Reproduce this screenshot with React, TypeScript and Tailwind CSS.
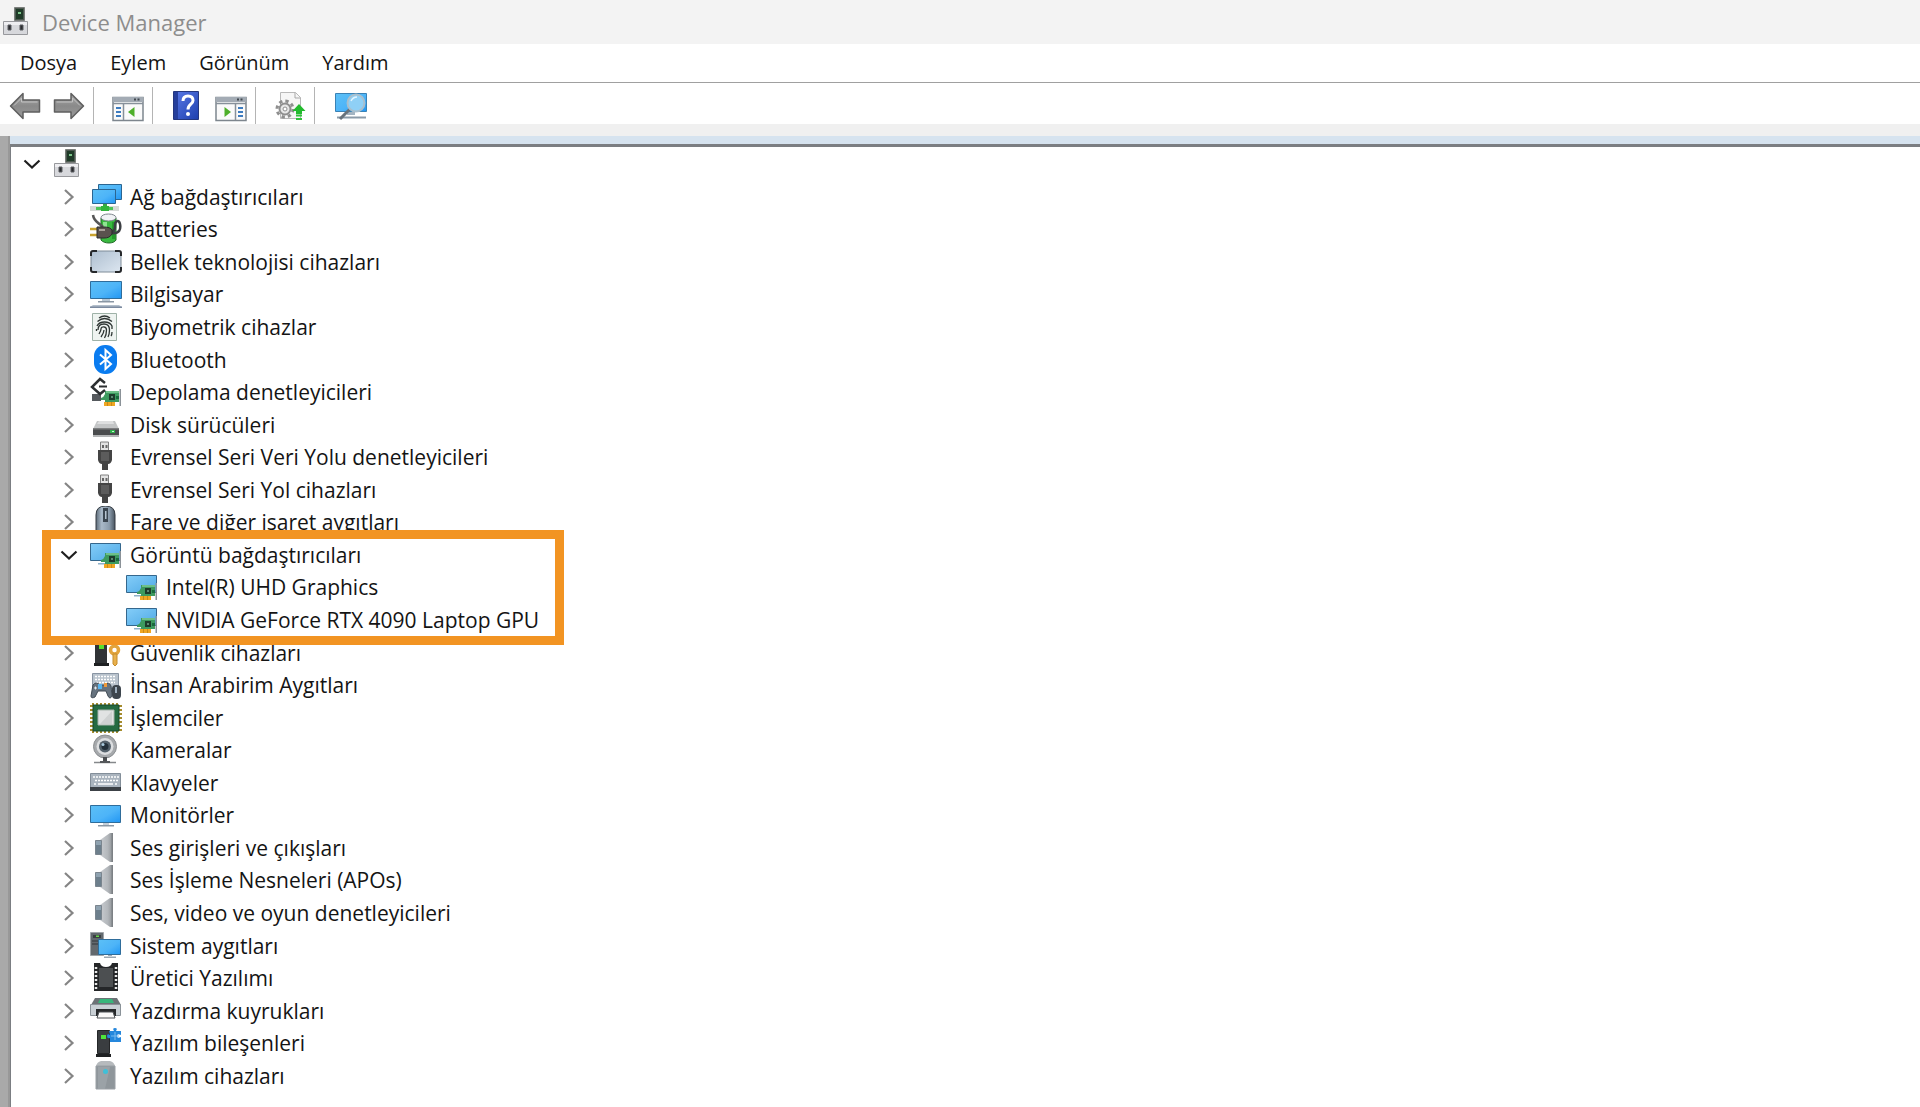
import { useState } from 'react';
import type { ReactNode } from 'react';

/* ---------- shared icon parts ---------- */

function Icon({ children }: { children: ReactNode }) {
  return (
    <svg viewBox="0 0 32 32" className="h-8 w-8 shrink-0" aria-hidden="true">
      {children}
    </svg>
  );
}

function Gradients() {
  return (
    <svg className="absolute h-0 w-0" aria-hidden="true">
      <defs>
        <linearGradient id="screen" x1="0" y1="0" x2="1" y2="1">
          <stop offset="0" stopColor="#5cc0f6" />
          <stop offset="0.55" stopColor="#4db4f8" />
          <stop offset="1" stopColor="#2196f3" />
        </linearGradient>
        <linearGradient id="paleScreen" x1="0" y1="0" x2="1" y2="1">
          <stop offset="0" stopColor="#84cdf8" />
          <stop offset="1" stopColor="#4fa9e6" />
        </linearGradient>
        <linearGradient id="steel" x1="0" y1="0" x2="1" y2="1">
          <stop offset="0" stopColor="#aebfd0" />
          <stop offset="1" stopColor="#dce6f0" />
        </linearGradient>
        <linearGradient id="arrow" x1="0" y1="0" x2="0" y2="1">
          <stop offset="0" stopColor="#a9a9a9" />
          <stop offset="0.5" stopColor="#8a8a8a" />
          <stop offset="1" stopColor="#9a9a9a" />
        </linearGradient>
        <linearGradient id="cone" x1="0" y1="0" x2="1" y2="0">
          <stop offset="0" stopColor="#c9ccd0" />
          <stop offset="0.6" stopColor="#b3b7bb" />
          <stop offset="1" stopColor="#8c9094" />
        </linearGradient>
        <linearGradient id="mouse" x1="0" y1="0" x2="1" y2="0">
          <stop offset="0" stopColor="#5e6c79" />
          <stop offset="0.3" stopColor="#a9b9c8" />
          <stop offset="0.7" stopColor="#8a9bab" />
          <stop offset="1" stopColor="#4a5560" />
        </linearGradient>
        <linearGradient id="book" x1="0" y1="0" x2="1" y2="1">
          <stop offset="0" stopColor="#5b7be8" />
          <stop offset="1" stopColor="#1d3fae" />
        </linearGradient>
      </defs>
    </svg>
  );
}

function DeviceHubIcon() {
  return (
    <svg viewBox="0 0 28 32" className="h-8 w-7 shrink-0" aria-hidden="true">
      <path d="M12.5 1.500h10v13h-10z" fill="#4d5951" stroke="#7b7f7c" />
      <path d="M14 3h7v10h-7z" fill="#1f3a28" />
      <path d="M16 6h3v2h-3z" fill="#7dc68a" />
      <path d="M1.500 15.500h24v13h-24z" fill="#d7d8dc" stroke="#97989c" />
      <path d="M2 16h23v3H2z" fill="#eeeef1" />
      <path d="M6 19h3v5H6zM18 19h3v5h-3z" fill="#2b2c30" stroke="#5b5c60" />
    </svg>
  );
}

const NetworkIcon = () => (
  <Icon>
    <path d="M8.500 3.500h23v15h-23z" fill="url(#screen)" stroke="#2b6591" />
    <path d="M2.500 8.500h23v14h-23z" fill="url(#screen)" stroke="#2b6591" />
    <path d="M13 23h4v3h-4z" fill="#3aa745" />
    <path d="M0 25h29v5H0z" fill="#d5dad6" />
    <path d="M6 26h17v3H6z" fill="#4cc456" />
    <path d="M11 25h8v5h-8z" fill="#30b53b" />
  </Icon>
);

const BatteryIcon = () => (
  <Icon>
    <path d="M11 5c3 3 12 3 15 0v22c-2 4-12 4-15 0z" fill="#39b93f" stroke="#226b28" />
    <path d="M13 9h4v9h-4z" fill="#8fe491" />
    <path d="M22 9h3v17h-3z" fill="#259a2c" />
    <ellipse cx="18.500" cy="4.500" rx="7.500" ry="3.500" fill="#f0f2f4" stroke="#7d858c" />
    <path d="M3 2c1 7 5 7 10 12" fill="none" stroke="#565656" strokeWidth="2.500" />
    <path d="M21 20c9 1 10-4 9-9s-5-3-5 1 0 5-3 7" fill="none" stroke="#3c3f43" strokeWidth="2.500" />
    <path d="M0 16h8M0 22h8" stroke="#c9a330" strokeWidth="2.500" />
    <path d="M7 14h7c4 0 7 1 8 3v4c-2 3-4 4-8 4H7z" fill="#5a524e" stroke="#2b2b2b" />
    <path d="M9 16h6v2H9z" fill="#a9a09a" />
  </Icon>
);

const MemoryIcon = () => (
  <Icon>
    <rect x="1" y="5" width="30" height="21" rx="2" fill="url(#steel)" stroke="#7f8c98" />
    <path
      d="M1 10V7q0-2 2-2h4M25 5h4q2 0 2 2v3M31 21v3q0 2-2 2h-4M7 26H3q-2 0-2-2v-3"
      fill="none"
      stroke="#26282b"
      strokeWidth="2"
    />
  </Icon>
);

const ComputerIcon = () => (
  <Icon>
    <path d="M.5 3.500h31v17H.5z" fill="url(#screen)" stroke="#2f6d9b" />
    <path d="M12 21h8v2h-8z" fill="#b9c7d3" />
    <path d="M8 23h16v1.500H8z" fill="#8a97a4" />
    <path d="M3 27h26l3 2H0z" fill="#b3bfcb" />
    <path d="M0 28.500h32V30H0z" fill="#7c8ba0" />
  </Icon>
);

const FingerprintIcon = () => (
  <Icon>
    <path d="M2.500 2.500h24v27h-24z" fill="#eff4f1" stroke="#9fb2a8" />
    <g fill="none" stroke="#2e3533" strokeWidth="1.300">
      <path d="M9 7q5.500-4 11 0M7.500 10.500q7-6 14.500 0M7 15q2-4 7.500-4t7.500 4v3M8 19q0-6 6-6 5.500 0 5.500 6 0 4-1.500 7" />
      <path d="M9 23q2-3 2-5c0-3 5.500-3 5.500 1q0 5-2 8M11 26q3-4 3-7M22 21q0 3-1 4M6.500 18v2" />
    </g>
  </Icon>
);

const BluetoothIcon = () => (
  <Icon>
    <rect x="4" y="1" width="23" height="29" rx="11" fill="#0a7cf0" />
    <path d="M10 10.500l11 9.500-5.500 5V6l5.500 5-11 9.500" fill="none" stroke="#fff" strokeWidth="2" />
  </Icon>
);

function Card({ y = 0 }: { y?: number }) {
  return (
    <g transform={`translate(0 ${y})`}>
      <path d="M11 21q3-1 4-4v-3h14v11H15v-2h-4z" fill="#3d9a5f" />
      <path d="M16 14h13v2H16z" fill="#6fbf88" />
      <path d="M19 17h6v6h-6z" fill="#1d3b2b" />
      <path d="M21 19h2v2h-2z" fill="#5c8870" />
      <path d="M26 19h3v3h-3z" fill="#1b6a3d" />
      <path d="M14 25h11v4H14z" fill="#f0a723" />
      <path d="M17.500 25v4M21.500 25v4" stroke="#c98b1a" />
      <path d="M29.500 12H31v17h-1.500z" fill="#8b9298" />
    </g>
  );
}

const StorageIcon = () => (
  <Icon>
    <path d="M2 18h9v7H2z" fill="#55595d" />
    <Card y={1} />
    <path d="M15 7l-5-4-8 8 8 7 5-4" fill="none" stroke="#2c2f31" strokeWidth="2.500" />
    <path d="M9 10.500h8" stroke="#2c2f31" strokeWidth="2" />
  </Icon>
);

const DiskIcon = () => (
  <Icon>
    <path d="M7 12h18l4 8H3z" fill="#c3c5c6" />
    <path d="M9 12h14l1 3H7z" fill="#dedfe0" />
    <path d="M3 19h26v7H3z" fill="#4a4c4e" />
    <path d="M3 19h26v1.500H3z" fill="#7d7f80" />
    <path d="M20 21h5v3h-5z" fill="#2fae4a" />
    <path d="M22 22h2v1h-2z" fill="#c4ffcf" />
    <path d="M3 26h26v2H3z" fill="#b3b5b6" />
  </Icon>
);

const UsbIcon = () => (
  <Icon>
    <path d="M10.500 1h8v9h-8z" fill="#e3e3e3" stroke="#808080" />
    <path d="M12 4h2v3h-2zM15.500 4h2v3h-2z" fill="#666" />
    <path d="M8 9h14v10q-1 4-4 4h-6q-3 0-4-4z" fill="#444" />
    <path d="M11 11h8v9h-8z" fill="#5c5c5c" />
    <path d="M12 22h6v7h-6z" fill="#444" />
  </Icon>
);

const MouseIcon = () => (
  <Icon>
    <path d="M6 30V9q0-9 9.500-9T25 9v21z" fill="url(#mouse)" stroke="#343b42" />
    <path d="M13 2h5v14h-5z" fill="#3b4650" />
    <path d="M15 5h1.500v8H15z" fill="#b6c4d0" />
  </Icon>
);

const DisplayIcon = () => (
  <Icon>
    <path d="M.5 4.500h30v17H.5z" fill="url(#paleScreen)" stroke="#35678d" />
    <path d="M8 24h7v1.500H8z" fill="#8fb1c9" />
    <Card />
  </Icon>
);

const SecurityIcon = () => (
  <Icon>
    <path d="M5 2h12v24H5z" fill="#303336" />
    <path d="M9 8h5v4H9z" fill="#58e02c" />
    <path d="M4 26h15v3H4z" fill="#1e2022" />
    <circle cx="24.500" cy="13" r="4" fill="none" stroke="#e2a43c" strokeWidth="3.500" />
    <path d="M23 17h4v10l-2 2-2-2z" fill="#e8b04c" stroke="#c58c2c" />
  </Icon>
);

const HidIcon = () => (
  <Icon>
    <path d="M2.500 4.500h26v15h-26z" fill="#b9c3cd" stroke="#8995a3" />
    <path d="M5 7.500h21M5 10.500h21M6 13.500h19" stroke="#fff" strokeWidth="1.500" strokeDasharray="2 1" />
    <path d="M3 16q3-4 7 0h5q4-4 6 1l1 10q-2 4-4 0l-2-5H8l-3 6q-4 2-4-1z" fill="#67737f" stroke="#414b55" />
    <path d="M8 15h4v5H8z" fill="#57b4ee" />
    <path d="M14 14h3v4h-3z" fill="#ee9a3a" />
    <path d="M4 19h3M5.500 17.500v3" stroke="#e5eaee" />
    <rect x="22" y="16" width="9" height="14" rx="4" fill="#3d454d" />
    <path d="M25 18h2v6h-2z" fill="#9fb0bf" />
  </Icon>
);

const CpuIcon = () => (
  <Icon>
    <path d="M2 2.500h28M2 29.500h28" stroke="#a58c2e" strokeWidth="3" strokeDasharray="2 2" />
    <path d="M1.500 3v26M30.500 3v26" stroke="#a58c2e" strokeWidth="3" strokeDasharray="2 2" />
    <path d="M3 3h26v26H3z" fill="#256b42" stroke="#17492c" />
    <path d="M8 8h16v15H8z" fill="#e1e3e3" stroke="#a8b5ad" />
    <path d="M10 22L22 9v13z" fill="#cfd2d2" />
  </Icon>
);

const CameraIcon = () => (
  <Icon>
    <circle cx="15" cy="12.500" r="11.500" fill="#a6a9ac" stroke="#8c8f92" />
    <circle cx="15" cy="12.500" r="8.500" fill="#dcdee0" />
    <circle cx="15" cy="12.500" r="6" fill="#54616b" />
    <circle cx="15" cy="12.500" r="3.500" fill="#23303a" />
    <circle cx="13" cy="10.500" r="1.500" fill="#a9c8dc" />
    <path d="M13 23h4v4h-4z" fill="#4b4e51" />
    <path d="M4 28.500h22" stroke="#85888b" strokeWidth="1.500" />
    <path d="M10 27h10v2H10z" fill="#55585b" />
  </Icon>
);

const KeyboardIcon = () => (
  <Icon>
    <path d="M.5 6.500h30v17H.5z" fill="#aab4be" stroke="#838e99" />
    <path d="M3 10h26M5 13.500h23M4 17h2m19 0h3" stroke="#fff" strokeWidth="1.500" strokeDasharray="2 1" />
    <path d="M8 17h15" stroke="#fff" strokeWidth="1.500" />
    <path d="M0 20h31v4H0z" fill="#3c4146" />
  </Icon>
);

const MonitorIcon = () => (
  <Icon>
    <path d="M.5 6.500h30v17H.5z" fill="url(#screen)" stroke="#2f6d9b" />
    <path d="M13 24h6v2h-6z" fill="#c3ced8" />
    <path d="M8 26h16v1.500H8z" fill="#8b98a5" />
  </Icon>
);

const SpeakerIcon = () => (
  <Icon>
    <path d="M10 8L20 1h3v29h-3L10 23z" fill="url(#cone)" />
    <path d="M21.500 1H23v29h-1.500z" fill="#7d8185" />
    <path d="M5.500 8.500h6v14h-6z" fill="#6d7f8c" stroke="#7a858e" />
    <path d="M6 9h5v4H6z" fill="#8fa2b0" />
  </Icon>
);

const SystemIcon = () => (
  <Icon>
    <path d="M.5 2.500h13v23H.5z" fill="#63696e" stroke="#a0a5a9" />
    <path d="M3 5h8v3H3z" fill="#3b4043" />
    <path d="M6 5.500h3V7H6z" fill="#69d94a" />
    <path d="M2 11h6M2 14h6" stroke="#33373a" />
    <path d="M8.500 9.500h22v15h-22z" fill="url(#screen)" stroke="#2f6d9b" />
    <path d="M18 25h4v1h-4zM14 26.500h12V28H14z" fill="#9ba7b2" />
  </Icon>
);

const FirmwareIcon = () => (
  <Icon>
    <path d="M4 1h6q1 4 6 4t6-4h6v28H4z" fill="#252729" />
    <path d="M9 6h14v19H9z" fill="#4c4f51" />
    <path d="M6 5v22M26 5v22" stroke="#e8e8e8" strokeWidth="2.500" strokeDasharray="2 2" />
  </Icon>
);

const PrinterIcon = () => (
  <Icon>
    <path d="M5 3h22l4 7H1z" fill="#6c7276" />
    <path d="M10 4h12l2 4H8z" fill="#38b67b" />
    <path d="M.5 9.500h30v11H.5z" fill="#c9d0d5" stroke="#8a9298" />
    <path d="M6 14h20v7H6z" fill="#26292b" />
    <path d="M9 17h14l2 6H7z" fill="#fafafa" stroke="#4e5356" />
  </Icon>
);

const ComponentIcon = () => (
  <Icon>
    <path d="M7.500 3.500h12v23h-12z" fill="#3a3d40" stroke="#242628" />
    <path d="M11 8h5v4h-5z" fill="#4fe53a" />
    <path d="M6 27h15v3H6z" fill="#1f2123" />
    <path d="M19 4h5q-2-3 1-3t1 3h5v4q-4-2-4 1t4 1v5H20v-4q-3 1-3-2t3-1z" fill="#2587dc" />
    <path d="M21 9h8M25 5v8" stroke="#7cbcf0" />
  </Icon>
);

const SoftwareIcon = () => (
  <Icon>
    <path d="M6 6q1-4 5-5h9q4 1 5 5z" fill="#b6babd" />
    <path d="M6 6h19v23H6z" fill="#8f969b" stroke="#9aa0a5" />
    <path d="M8 7h12l-5 22H8z" fill="#9ba2a7" />
    <circle cx="15.500" cy="11.500" r="2.500" fill="#3fc0d8" />
  </Icon>
);

/* ---------- toolbar drawings ---------- */

function ArrowIcon({ flip = false }: { flip?: boolean }) {
  return (
    <svg viewBox="0 0 32 32" className={`h-8 w-8 ${flip ? '-scale-x-100' : ''}`} aria-hidden="true">
      <path
        d="M1.500 16L14 3.500V10h16.500v12H14v6.500z"
        fill="url(#arrow)"
        stroke="#5f5f5f"
        strokeWidth="1.500"
        strokeLinejoin="round"
      />
      <path d="M5 15.500l7.500-7.500v4h16" fill="none" stroke="#c2c2c2" />
    </svg>
  );
}

function PaneIcon({ flip = false }: { flip?: boolean }) {
  return (
    <svg viewBox="0 0 32 32" className="h-8 w-8" aria-hidden="true">
      <path d="M1 7.500h30v23H1z" fill="#fafafa" stroke="#7e868e" strokeWidth="1.500" />
      <path d="M1 7h30v5H1z" fill="#a3abb4" />
      <path d="M22 9.500h2m1.500 0h2" stroke="#41484f" strokeWidth="2" />
      <path d="M1 13.500h30" stroke="#87909a" strokeWidth="1.500" />
      <g transform={flip ? 'translate(32 0) scale(-1 1)' : undefined}>
        <path d="M11.500 14v16" stroke="#87909a" strokeWidth="1.500" />
        <path d="M4 18h5M4 22h5M4 26h5" stroke="#3d7cc0" strokeWidth="2" />
        <path d="M22.500 17v10L16 22z" fill="#4eaf2a" />
      </g>
    </svg>
  );
}

function HelpIcon() {
  return (
    <svg viewBox="0 0 26 30" className="h-[30px] w-[26px]" aria-hidden="true">
      <path d="M.5.5h25v28H.5z" fill="url(#book)" stroke="#24377f" />
      <path d="M1 1h4v27H1z" fill="#263f9c" />
      <path d="M10 10q0-5 5-5t5 4.500c0 4-5 3.500-5 9" fill="none" stroke="#fff" strokeWidth="3" />
      <circle cx="15" cy="23" r="2" fill="#fff" />
    </svg>
  );
}

function ScanIcon() {
  return (
    <svg viewBox="0 0 32 32" className="h-8 w-8" aria-hidden="true">
      <path d="M6.500 2.500h15l5 5v21h-20z" fill="#f6f6f6" stroke="#b9b9b9" />
      <path d="M21 2.500V8h5.500" fill="none" stroke="#a9a9a9" />
      <circle cx="11" cy="19" r="8" fill="none" stroke="#8f8f8f" strokeWidth="3" strokeDasharray="3.300 3" />
      <circle cx="11" cy="19" r="5.500" fill="#e8e8e8" stroke="#8f8f8f" strokeWidth="2" />
      <circle cx="11" cy="19" r="2" fill="#fff" stroke="#8f8f8f" />
      <path d="M25 14l6.500 7H28v3h-6v-3h-3.500z" fill="#23bb2e" />
      <path d="M22 25.500h6M22 29h6" stroke="#2fc23a" strokeWidth="2" />
    </svg>
  );
}

function SearchMonitorIcon() {
  return (
    <svg viewBox="0 0 32 32" className="h-8 w-8" aria-hidden="true">
      <path d="M.5 3.500h31v18H.5z" fill="url(#screen)" stroke="#3a82b5" />
      <path d="M12 22h8v3h-8z" fill="#a3b4c2" />
      <path d="M2 27.500h29" stroke="#8a9aa8" strokeWidth="2" />
      <path d="M15 19L5 29" stroke="#68727b" strokeWidth="3" />
      <circle cx="21" cy="13" r="8.500" fill="#8fd0f6" stroke="#a9bfcd" strokeWidth="2" />
      <path d="M16 11q2-4 6-4" fill="none" stroke="#e3f5ff" strokeWidth="1.500" />
    </svg>
  );
}

function Chevron({ open }: { open: boolean }) {
  return (
    <svg viewBox="0 0 20 20" className="h-5 w-5" fill="none" aria-hidden="true">
      {open ? (
        <path d="M2.500 6.500L10 13.500l7.500-7" stroke="#1f1f1f" strokeWidth="2.200" />
      ) : (
        <path d="M6 3l7.500 7L6 17" stroke="#858585" strokeWidth="2.200" />
      )}
    </svg>
  );
}

/* ---------- data ---------- */

type Device = { name: string; icon: () => ReactNode };

const menus = ['Dosya', 'Eylem', 'Görünüm', 'Yardım'];

const before: Device[] = [
  { name: 'Ağ bağdaştırıcıları', icon: NetworkIcon },
  { name: 'Batteries', icon: BatteryIcon },
  { name: 'Bellek teknolojisi cihazları', icon: MemoryIcon },
  { name: 'Bilgisayar', icon: ComputerIcon },
  { name: 'Biyometrik cihazlar', icon: FingerprintIcon },
  { name: 'Bluetooth', icon: BluetoothIcon },
  { name: 'Depolama denetleyicileri', icon: StorageIcon },
  { name: 'Disk sürücüleri', icon: DiskIcon },
  { name: 'Evrensel Seri Veri Yolu denetleyicileri', icon: UsbIcon },
  { name: 'Evrensel Seri Yol cihazları', icon: UsbIcon },
  { name: 'Fare ve diğer işaret aygıtları', icon: MouseIcon },
];

const adapters = ['Intel(R) UHD Graphics', 'NVIDIA GeForce RTX 4090 Laptop GPU'];

const after: Device[] = [
  { name: 'Güvenlik cihazları', icon: SecurityIcon },
  { name: 'İnsan Arabirim Aygıtları', icon: HidIcon },
  { name: 'İşlemciler', icon: CpuIcon },
  { name: 'Kameralar', icon: CameraIcon },
  { name: 'Klavyeler', icon: KeyboardIcon },
  { name: 'Monitörler', icon: MonitorIcon },
  { name: 'Ses girişleri ve çıkışları', icon: SpeakerIcon },
  { name: 'Ses İşleme Nesneleri (APOs)', icon: SpeakerIcon },
  { name: 'Ses, video ve oyun denetleyicileri', icon: SpeakerIcon },
  { name: 'Sistem aygıtları', icon: SystemIcon },
  { name: 'Üretici Yazılımı', icon: FirmwareIcon },
  { name: 'Yazdırma kuyrukları', icon: PrinterIcon },
  { name: 'Yazılım bileşenleri', icon: ComponentIcon },
  { name: 'Yazılım cihazları', icon: SoftwareIcon },
];

/* ---------- page ---------- */

function ToolButton({ label, children }: { label: string; children: ReactNode }) {
  return (
    <button type="button" aria-label={label} className="flex h-8 items-center">
      {children}
    </button>
  );
}

function Separator() {
  return <span className="w-px self-stretch bg-[#b4b4b4]" />;
}

function DeviceRow({ name, icon: DeviceIcon }: Device) {
  return (
    <li className="flex min-h-8 items-center pl-12">
      <button type="button" aria-label={name} className="mr-[11px]">
        <Chevron open={false} />
      </button>
      <DeviceIcon />
      <span className="ml-2">{name}</span>
    </li>
  );
}

export default function App() {
  const [open, setOpen] = useState(true);

  return (
    <div className="flex min-h-screen flex-col bg-white font-['Open_Sans','Noto_Sans',sans-serif] text-[21px] leading-8 text-[#141414]">
      <Gradients />

      {/* Title bar */}
      <header className="flex h-11 items-center gap-3 bg-[#f3f3f3] pl-[2px] text-[22px] text-[#8d8d8d]">
        <DeviceHubIcon />
        <h1>Device Manager</h1>
      </header>

      {/* Menu */}
      <nav className="flex h-[38px] items-center gap-[33px] pl-5 text-xl">
        {menus.map((menu) => (
          <button key={menu} type="button">
            {menu}
          </button>
        ))}
      </nav>

      {/* Toolbar */}
      <div className="flex h-[42px] items-center border-t border-[#a0a0a0] pt-1 pl-[9px]">
        <div className="flex gap-3 pr-2">
          <ToolButton label="Geri">
            <ArrowIcon />
          </ToolButton>
          <ToolButton label="İleri">
            <ArrowIcon flip />
          </ToolButton>
        </div>
        <Separator />
        <div className="flex pr-2 pl-[18px]">
          <ToolButton label="Konsol ağacını göster">
            <PaneIcon />
          </ToolButton>
        </div>
        <Separator />
        <div className="flex gap-4 pr-2 pl-5">
          <ToolButton label="Yardım">
            <HelpIcon />
          </ToolButton>
          <ToolButton label="Eylem bölmesini göster">
            <PaneIcon flip />
          </ToolButton>
        </div>
        <Separator />
        <div className="flex pr-2 pl-[18px]">
          <ToolButton label="Sürücüyü güncelleştir">
            <ScanIcon />
          </ToolButton>
        </div>
        <Separator />
        <div className="flex pl-5">
          <ToolButton label="Donanım değişikliklerini tara">
            <SearchMonitorIcon />
          </ToolButton>
        </div>
      </div>

      <div className="h-3 bg-[#f0f0f0]" />

      {/* Device tree */}
      <div className="flex flex-1 border-l-8 border-[#a9a9a9]">
        <main className="flex flex-1 flex-col border-l-2 border-[#989898]">
          <div className="h-2 bg-[#d6e3ef]" />
          <ul className="grid flex-1 auto-rows-fr border-t-[3px] border-l border-[#7b7e82] pt-px pb-[15px]">
            <li className="flex min-h-8 items-center pl-[11px]">
              <button type="button" aria-label="Aygıt ağacı" className="mr-[11px]">
                <Chevron open />
              </button>
              <DeviceHubIcon />
            </li>

            {before.map((device) => (
              <DeviceRow key={device.name} {...device} />
            ))}

            <li className="relative row-span-3 grid grid-rows-subgrid">
              <div className="flex items-center pl-12">
                <button
                  type="button"
                  aria-label="Görüntü bağdaştırıcıları"
                  aria-expanded={open}
                  onClick={() => setOpen(!open)}
                  className="mr-[11px]"
                >
                  <Chevron open={open} />
                </button>
                <DisplayIcon />
                <span className="ml-2">Görüntü bağdaştırıcıları</span>
              </div>
              {open &&
                adapters.map((adapter) => (
                  <div key={adapter} className="flex items-center pl-[115px]">
                    <DisplayIcon />
                    <span className="ml-2">{adapter}</span>
                  </div>
                ))}
              {/* Highlight frame around the display adapters */}
              <span className="pointer-events-none absolute -inset-y-[9px] left-[31px] w-[522px] border-9 border-[#f29422]" />
            </li>

            {after.map((device) => (
              <DeviceRow key={device.name} {...device} />
            ))}
          </ul>
        </main>
      </div>
    </div>
  );
}
